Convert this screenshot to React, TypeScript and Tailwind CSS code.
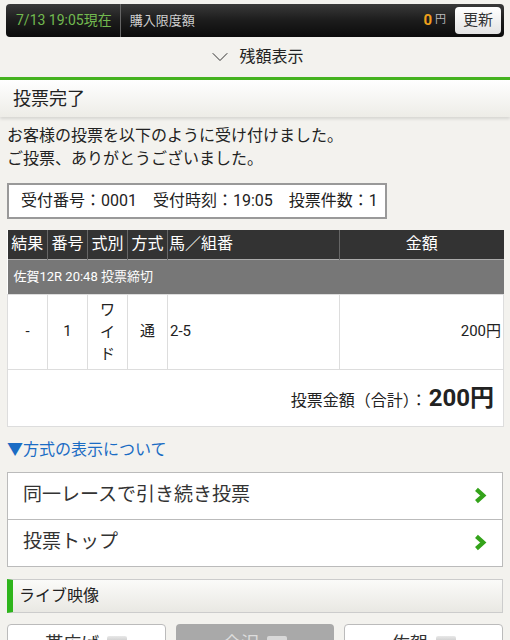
import { ChevronDown } from "lucide-react";

const FONT = "font-['Roboto','Noto_Sans_CJK_JP',sans-serif]";

function GreenChevron() {
  return (
    <svg viewBox="0 0 12 16" className="h-[17px] w-[13px]" aria-hidden>
      <path d="M2.2 2.2 8.6 8l-6.4 5.8" fill="none" stroke="#34a31a" strokeWidth="4" strokeLinejoin="miter" />
    </svg>
  );
}

function CamIcon({ muted }: { muted?: boolean }) {
  return (
    <span
      aria-hidden
      className={`inline-block h-[16px] w-[20px] rounded-[2px] ${muted ? "bg-[#d8d8d8]" : "bg-gradient-to-b from-[#e8e8e8] to-[#9a9a9a]"}`}
    />
  );
}

export default function App() {
  return (
    <div className={`${FONT} h-[640px] w-[510px] overflow-hidden bg-[#f3f2ee] text-[#222]`}>
      {/* balance bar */}
      <div className="px-[6px] pt-[4px]">
        <div className="flex h-[33px] items-center rounded-[4px] bg-gradient-to-b from-[#3a3a3a] via-[#1c1c1c] to-[#0c0c0c] pr-[3px]">
          <span className="pl-[10px] pr-[8px] text-[14px] text-[#72b94f]">7/13 19:05現在</span>
          <span className="h-[33px] w-px bg-[#666]" />
          <span className="flex-1 pl-[9px] text-[13px] text-[#cfcfcf]">購入限度額</span>
          <span className="text-[15px] font-bold text-[#f0a01c]">0</span>
          <span className="ml-[3px] mr-[9px] text-[11px] text-[#bbb]">円</span>
          <button type="button" className="h-[27px] w-[46px] rounded-[4px] bg-gradient-to-b from-white to-[#e3e3e3] text-[15px] text-[#333]">
            更新
          </button>
        </div>
      </div>
      <div className="flex h-[40px] items-center justify-center gap-[5px] text-[16px] text-[#222]">
        <ChevronDown className="h-[28px] w-[28px]" strokeWidth={0.8} />
        残額表示
      </div>

      {/* title */}
      <div className="border-t-[3px] border-[#44b21f] bg-gradient-to-b from-white to-[#edece7] shadow-[0_2px_3px_rgba(0,0,0,0.12)]">
        <h1 className="flex h-[37px] items-center px-[13px] text-[18px] font-normal">投票完了</h1>
      </div>

      <div className="px-[7px]">
        <p className="mt-[7px] text-[16px] leading-[23px]">
          お客様の投票を以下のように受け付けました。
          <br />
          ご投票、ありがとうございました。
        </p>

        <div className="mt-[13px] flex h-[36px] w-[380px] items-center border-2 border-[#999] bg-white pl-[12px] text-[16px]">
          受付番号：0001　受付時刻：19:05　投票件数：1
        </div>

        {/* ticket table */}
        <table className="mt-[11px] w-[497px] table-fixed border-collapse bg-white text-[15px]">
          <colgroup>
            <col className="w-[40px]" />
            <col className="w-[40px]" />
            <col className="w-[40px]" />
            <col className="w-[40px]" />
            <col className="w-[172px]" />
            <col />
          </colgroup>
          <thead>
            <tr className="h-[29px] bg-[#333] text-[16px] text-white">
              <th className="border-r border-[#666] font-normal">結果</th>
              <th className="border-r border-[#666] font-normal">番号</th>
              <th className="border-r border-[#666] font-normal">式別</th>
              <th className="border-r border-[#666] font-normal">方式</th>
              <th className="border-r border-[#666] pl-[1px] text-left font-normal">馬／組番</th>
              <th className="font-normal">金額</th>
            </tr>
          </thead>
          <tbody>
            <tr className="h-[35px] bg-[#777] text-white">
              <td colSpan={6} className="border-t border-[#aaa] px-[6px] text-[13px]">
                佐賀12R 20:48 投票締切
              </td>
            </tr>
            <tr className="h-[75px] text-center">
              <td className="border border-[#ddd]">-</td>
              <td className="border border-[#ddd]">1</td>
              <td className="border border-[#ddd] leading-[22px]">
                ワ<br />イ<br />ド
              </td>
              <td className="border border-[#ddd]">通</td>
              <td className="border border-[#ddd] pl-[2px] text-left">2-5</td>
              <td className="border border-[#ddd] pr-[2px] text-right">200円</td>
            </tr>
            <tr className="h-[57px]">
              <td colSpan={6} className="border border-[#ddd] pr-[9px] text-right">
                <span className="text-[16px]">投票金額（合計）：</span>
                <span className="ml-[2px] text-[24px] font-bold">200円</span>
              </td>
            </tr>
          </tbody>
        </table>

        <p className="mt-[11px] text-[16px] text-[#1a6cc4]">▼方式の表示について</p>

        {/* links */}
        <div className="mt-[10px] border border-[#bbb] bg-white">
          <a className="flex h-[47px] items-center justify-between border-b border-[#bbb] pl-[15px] pr-[15px] text-[19px] text-[#333]">
            同一レースで引き続き投票
            <GreenChevron />
          </a>
          <a className="flex h-[46px] items-center justify-between pl-[15px] pr-[15px] text-[19px] text-[#333]">
            投票トップ
            <GreenChevron />
          </a>
        </div>

        {/* live video */}
        <div className="mt-[12px] flex h-[34px] items-center border border-l-[6px] border-[#ccc] border-l-[#2fb51c] bg-gradient-to-b from-[#fbfbf9] to-[#e9e8e3] pl-[6px] text-[16px]">
          ライブ映像
        </div>

        <div className="mt-[11px] grid grid-cols-3 gap-[10px]">
          <button type="button" className="flex h-[40px] items-center justify-center gap-[8px] rounded-[4px] border border-[#bbb] bg-white text-[18px] text-[#333]">
            帯広ば <CamIcon />
          </button>
          <button type="button" className="flex h-[40px] items-center justify-center gap-[8px] rounded-[4px] bg-[#a9a9a9] text-[18px] text-[#ddd]">
            金沢 <CamIcon muted />
          </button>
          <button type="button" className="flex h-[40px] items-center justify-center gap-[8px] rounded-[4px] border border-[#bbb] bg-white text-[18px] text-[#333]">
            佐賀 <CamIcon />
          </button>
        </div>
      </div>
    </div>
  );
}
